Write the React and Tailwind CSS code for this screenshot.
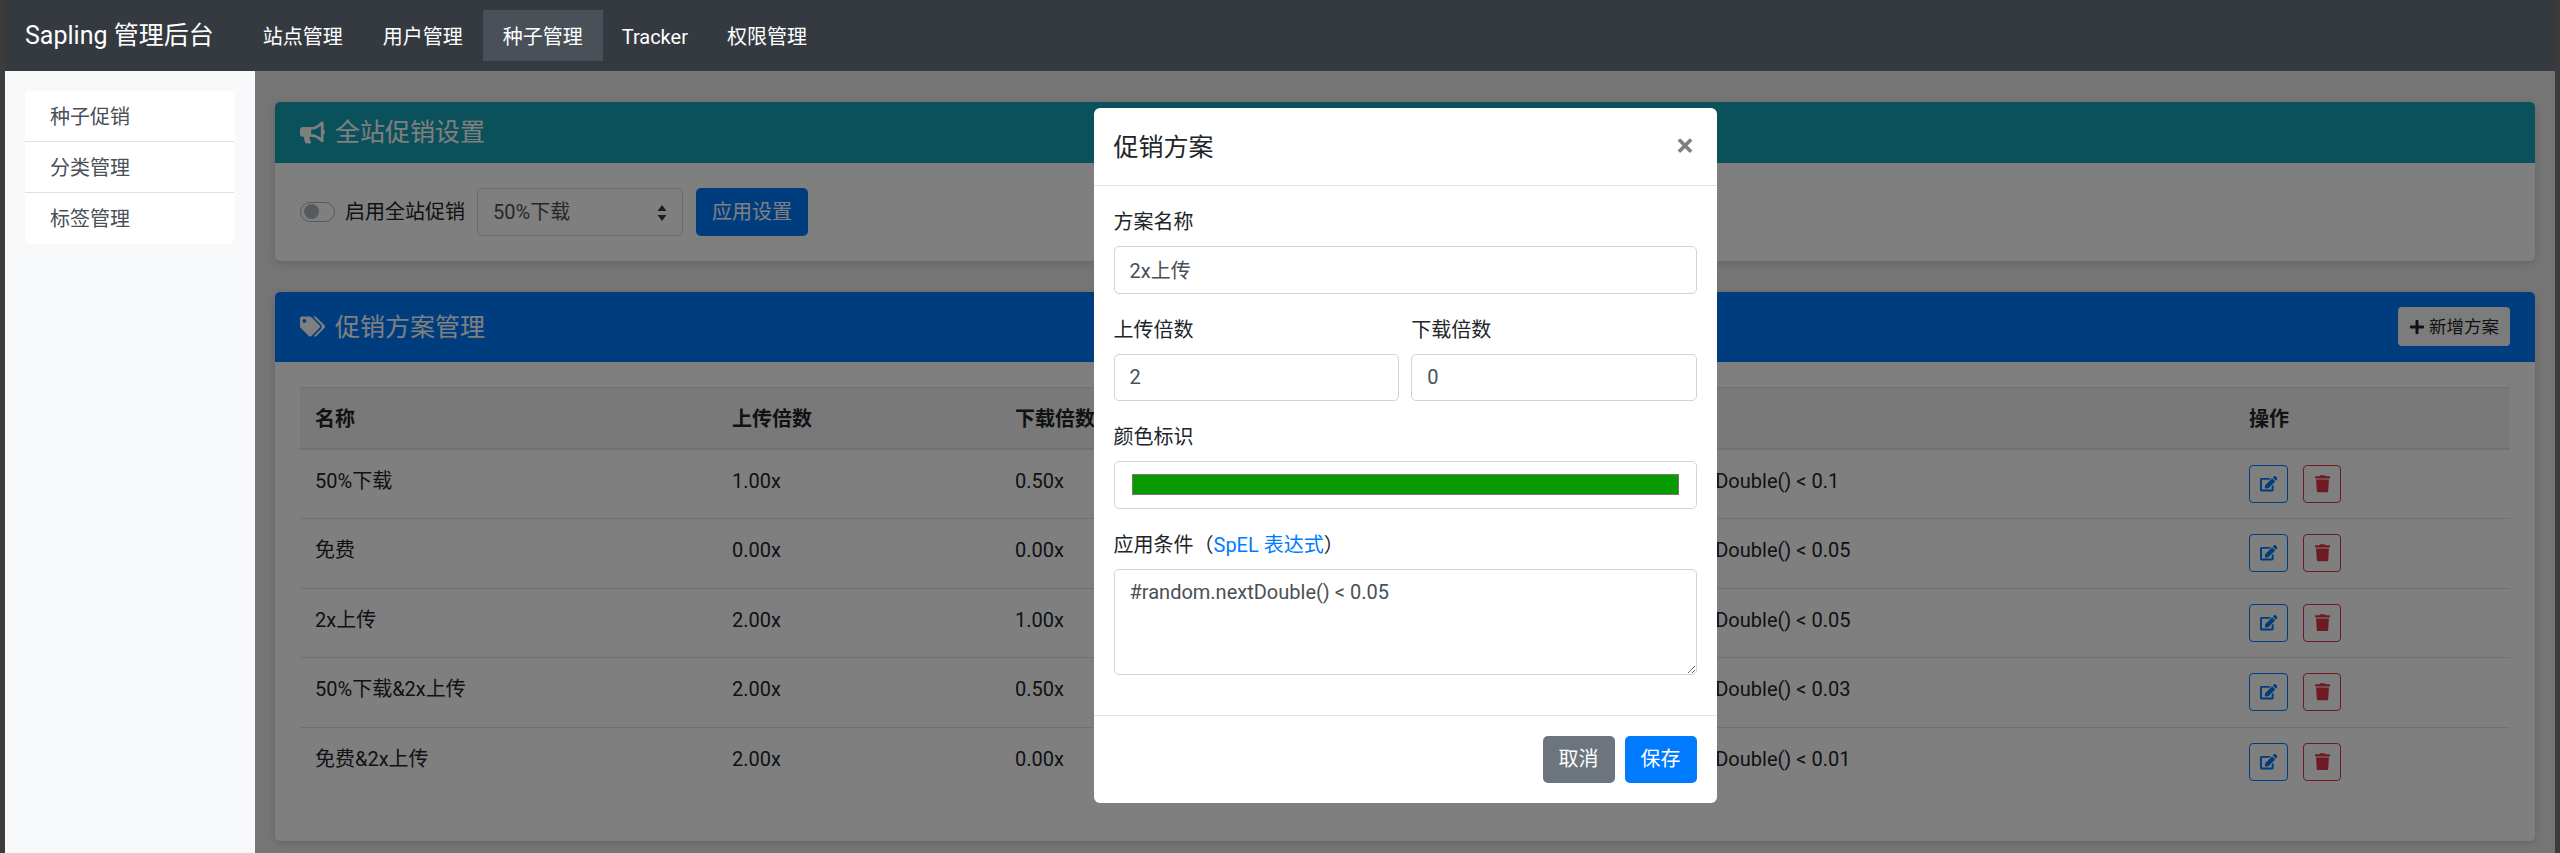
import React from "react";
import { FaBullhorn, FaTags, FaEdit, FaTrash, FaPlus } from "react-icons/fa";

const font = { fontFamily: 'Roboto,"Noto Sans CJK SC",sans-serif' };
const rows = [
  ["50%下载", "1.00x", "0.50x", "#random.nextDouble() < 0.1"],
  ["免费", "0.00x", "0.00x", "#random.nextDouble() < 0.05"],
  ["2x上传", "2.00x", "1.00x", "#random.nextDouble() < 0.05"],
  ["50%下载&2x上传", "2.00x", "0.50x", "#random.nextDouble() < 0.03"],
  ["免费&2x上传", "2.00x", "0.00x", "#random.nextDouble() < 0.01"],
];
const navs = ["站点管理", "用户管理", "种子管理", "Tracker", "权限管理"];
const side = ["种子促销", "分类管理", "标签管理"];

function Field({ label, children }) {
  return (
    <div className="mb-5 min-w-0 flex-1">
      <label className="mb-[10px] block h-[30px] pt-[1px] leading-[30px] text-[#212529]">{label}</label>
      {children}
    </div>
  );
}
function Input({ value }) {
  return (
    <input
      readOnly
      value={value}
      className="block h-[47.5px] w-full rounded-[5px] border border-[#ced4da] bg-white px-[15px] text-[20px] text-[#495057] outline-none"
    />
  );
}

export default function App() {
  return (
    <div className="flex h-[853px] flex-col overflow-hidden bg-[#3c3c3c] px-[5px] text-[20px] leading-[30px]" style={font}>
      <nav className="flex h-[71px] shrink-0 items-center bg-[#343a40] pl-[20px] text-white">
        <span className="mr-[29px] whitespace-nowrap pt-[1px] text-[25px]">Sapling 管理后台</span>
        {navs.map((n, i) => (
          <a key={n} className={`flex h-[51px] items-center pt-[2px] ${i === 2 ? "bg-[#495057]" : ""} ${i === 3 ? "px-[19px]" : "px-5"}`}>{n}</a>
        ))}
      </nav>
      <div className="flex min-h-0 flex-1">
        <aside className="w-[250px] shrink-0 bg-[#f8f9fa] pl-[20px] pr-[21px] pt-5">
          <div className="overflow-hidden rounded-[5px] bg-white text-[#495057]">
            {side.map((s, i) => (
              <div key={s} className={`h-[51px] pl-[25px] pt-[1px] leading-[50px] ${i < 2 ? "border-b border-[#dee2e6]" : ""}`}>{s}</div>
            ))}
          </div>
        </aside>
        <main className="relative min-w-0 flex-1 bg-[#ebebeb] pl-[20px] pr-[20px] pt-[31px]">
          <section className="mb-[31px] rounded-[5px] bg-white shadow-[0_2px_8px_rgba(0,0,0,0.15)]">
            <header className="flex h-[61px] items-center gap-[10px] rounded-t-[5px] bg-[#17a2b8] px-[25px] text-[25px] text-white">
              <FaBullhorn className="h-[25px] w-[25px]" />
              <span className="pt-[1px]">全站促销设置</span>
            </header>
            <div className="flex items-center p-[25px] text-[#212529]">
              <span className="mr-[10px] flex h-5 w-[35px] items-center rounded-full border border-[#adb5bd] bg-white pl-[3px]">
                <span className="h-[15px] w-[15px] rounded-full bg-[#adb5bd]"></span>
              </span>
              <span className="mr-[12px]">启用全站促销</span>
              <span className="relative mr-[13px] flex h-[47.5px] w-[206px] items-center rounded-[5px] border border-[#ced4da] bg-white pl-[15px] text-[#495057]">
                50%下载
                <svg className="absolute right-[15px] top-[16px]" width="10" height="16" viewBox="0 0 10 16"><path d="M5 0L9.5 6H.5zM5 16L.5 10h9z" fill="#343a40" /></svg>
              </span>
              <span className="flex h-[47.5px] w-[112px] items-center justify-center rounded-[5px] bg-[#007bff] text-white">应用设置</span>
            </div>
          </section>
          <section className="rounded-[5px] bg-white shadow-[0_2px_8px_rgba(0,0,0,0.15)]">
            <header className="flex h-[70px] items-center rounded-t-[5px] bg-[#007bff] pl-[25px] pr-[25px] text-[25px] text-white">
              <FaTags className="mr-[10px] h-[25px] w-[25px]" />
              <span className="pt-[3px]">促销方案管理</span>
              <span className="ml-auto flex h-[38.5px] w-[112px] items-center justify-center gap-[4px] rounded-[4px] bg-[#f8f9fa] text-[17.5px] text-[#212529]">
                <FaPlus className="h-[16px] w-[16px]" />新增方案
              </span>
            </header>
            <div className="p-[25px] pb-[44px]">
              <table className="w-full table-fixed border-collapse text-[#212529]">
                <colgroup>
                  <col className="w-[417px]" /><col className="w-[283px]" /><col className="w-[576px]" /><col className="w-[658px]" /><col />
                </colgroup>
                <thead>
                  <tr className="h-[62px] border-t border-b-2 border-[#dee2e6] bg-[#f2f2f2] text-left">
                    <th className="px-[15px] pt-[2px] font-bold">名称</th>
                    <th className="px-[15px] pt-[2px] font-bold">上传倍数</th>
                    <th className="px-[15px] pt-[2px] font-bold">下载倍数</th>
                    <th className="px-[15px] pt-[2px] font-bold">应用条件</th>
                    <th className="px-[15px] pt-[2px] font-bold">操作</th>
                  </tr>
                </thead>
                <tbody>
                  {rows.map((r, i) => (
                    <tr key={r[0]} className={`h-[69.5px] ${i < 4 ? "border-b border-[#dee2e6]" : ""}`}>
                      <td className="px-[15px] pt-[16px] align-top">{r[0]}</td>
                      <td className="px-[15px] pt-[16px] align-top">{r[1]}</td>
                      <td className="px-[15px] pt-[16px] align-top">{r[2]}</td>
                      <td className="px-[15px] pt-[16px] align-top">{r[3]}</td>
                      <td className="px-[15px] pt-[15px] align-top">
                        <div className="flex gap-[15px]">
                          <span className="flex h-[38px] w-[39px] items-center justify-center rounded-[4px] border border-[#007bff] text-[#007bff]"><FaEdit className="h-[17.5px] w-[17.5px]" /></span>
                          <span className="flex h-[38px] w-[38px] items-center justify-center rounded-[4px] border border-[#dc3545] text-[#dc3545]"><FaTrash className="h-[17.5px] w-[15px]" /></span>
                        </div>
                      </td>
                    </tr>
                  ))}
                </tbody>
              </table>
            </div>
          </section>
          <div className="absolute inset-0 flex items-start justify-center bg-black/50 pt-[37px]">
            <div className="w-[623px] rounded-[6px] bg-white">
              <div className="flex h-[78px] items-start justify-between border-b border-[#dee2e6] px-5 pt-5">
                <span className="pt-[1px] text-[25px] leading-[37.5px] text-[#212529]">促销方案</span>
                <span className="mr-[3px] mt-[2px] text-[32px] font-bold leading-[30px] text-black/50">×</span>
              </div>
              <div className="px-5 pb-5 pt-5">
                <Field label="方案名称"><Input value="2x上传" /></Field>
                <div className="flex gap-[12.5px]">
                  <Field label="上传倍数"><Input value="2" /></Field>
                  <Field label="下载倍数"><Input value="0" /></Field>
                </div>
                <Field label="颜色标识">
                  <div className="flex h-[47.5px] items-center rounded-[5px] border border-[#ced4da] bg-white px-[17px]">
                    <div className="h-[21px] w-full border border-[#767676] bg-[#079b00]"></div>
                  </div>
                </Field>
                <Field label={<>应用条件（<a className="text-[#007bff]">SpEL 表达式</a>）</>}>
                  <textarea
                    readOnly
                    value="#random.nextDouble() < 0.05"
                    className="block h-[106px] w-full rounded-[5px] border border-[#ced4da] bg-white px-[15px] py-[7px] text-[20px] text-[#495057] outline-none"
                  />
                </Field>
              </div>
              <div className="flex justify-end gap-[10px] border-t border-[#dee2e6] px-5 py-5">
                <span className="flex h-[47.5px] w-[72px] items-center justify-center rounded-[5px] bg-[#6c757d] text-white">取消</span>
                <span className="flex h-[47.5px] w-[72px] items-center justify-center rounded-[5px] bg-[#007bff] text-white">保存</span>
              </div>
            </div>
          </div>
        </main>
      </div>
    </div>
  );
}
